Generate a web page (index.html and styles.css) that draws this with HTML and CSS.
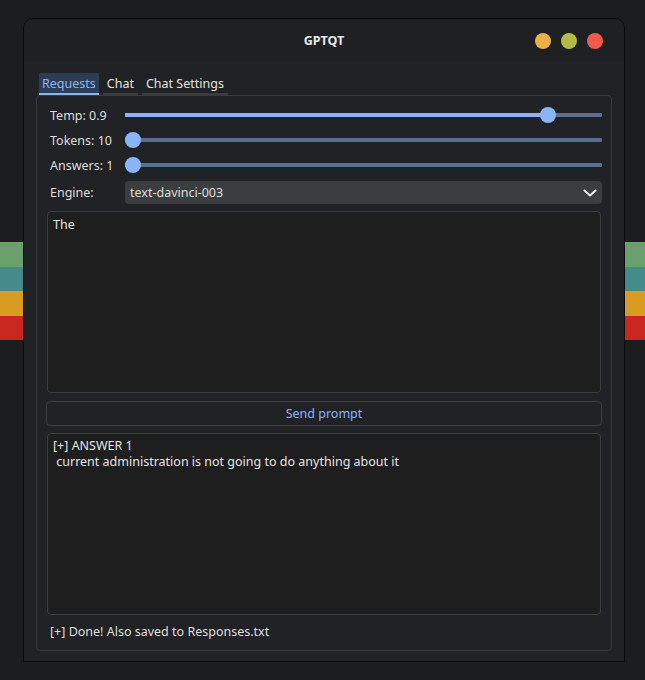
FILE: index.html
```html
<!DOCTYPE html>
<html>
<head>
<meta charset="utf-8">
<title>GPTQT</title>
<link rel="stylesheet" href="styles.css">
</head>
<body>
<div class="window">
  <div class="titlebar">
    <div class="spacer"></div>
    <div class="title">GPTQT</div>
    <div class="dots">
      <span class="dot dot-min"></span>
      <span class="dot dot-max"></span>
      <span class="dot dot-close"></span>
    </div>
  </div>
  <div class="content">
    <div class="tabs">
      <div class="tab active">Requests</div>
      <div class="tab">Chat</div>
      <div class="tab">Chat Settings</div>
    </div>
    <div class="pane">
      <div class="controls">
        <div class="label">Temp: 0.9</div>
        <div class="slider">
          <div class="fill" style="width: 423px"></div>
          <div class="handle" style="left: 415px"></div>
        </div>
        <div class="label">Tokens: 10</div>
        <div class="slider">
          <div class="fill" style="width: 8px"></div>
          <div class="handle" style="left: 0px"></div>
        </div>
        <div class="label">Answers: 1</div>
        <div class="slider">
          <div class="fill" style="width: 8px"></div>
          <div class="handle" style="left: 0px"></div>
        </div>
        <div class="label label-engine">Engine:</div>
        <div class="combo">
          <span>text-davinci-003</span>
          <svg class="chevron" width="14" height="8" viewBox="0 0 14 8"><path d="M1.5 1.5 L7 6.5 L12.5 1.5" fill="none" stroke="#f0f0f0" stroke-width="2" stroke-linecap="round" stroke-linejoin="round"/></svg>
        </div>
      </div>
      <div class="textbox prompt">The</div>
      <div class="button">Send prompt</div>
      <div class="textbox answer">[+] ANSWER 1<br>&nbsp;current administration is not going to do anything about it</div>
      <div class="status">[+] Done! Also saved to Responses.txt</div>
    </div>
  </div>
</div>
</body>
</html>
```
FILE: styles.css
```css
html, body {
  margin: 0;
  padding: 0;
}
body {
  width: 645px;
  height: 680px;
  overflow: hidden;
  font-family: "Noto Sans", "DejaVu Sans", sans-serif;
  font-size: 12.5px;
  color: #dedede;
  background:
    linear-gradient(to bottom,
      #1b1d1f 0, #1b1d1f 242px,
      #6b9f6e 242px, #6b9f6e 267px,
      #458b8c 267px, #458b8c 291px,
      #d99c23 291px, #d99c23 316px,
      #c8281f 316px, #c8281f 340px,
      #1b1d1f 340px, #1b1d1f 680px);
  display: flex;
  align-items: flex-start;
}
.window {
  margin: 18px 0 0 23px;
  width: 602px;
  height: 644px;
  box-sizing: border-box;
  border: 1px solid #0b0b0c;
  border-radius: 10px 10px 0 0;
  background: #212225;
  display: flex;
  flex-direction: column;
  overflow: hidden;
}
.titlebar {
  height: 43px;
  flex: none;
  background: #1e2022;
  display: grid;
  grid-template-columns: 1fr auto 1fr;
  align-items: center;
}
.title {
  font-weight: bold;
  font-size: 12.5px;
  color: #e8e8e8;
}
.dots {
  justify-self: end;
  display: flex;
  gap: 10px;
  padding-right: 21px;
}
.dot {
  width: 16px;
  height: 16px;
  border-radius: 50%;
  display: block;
}
.dot-min { background: #e9b143; }
.dot-max { background: #b2bb44; }
.dot-close { background: #f25a4c; }
.content {
  flex: 1;
  display: flex;
  flex-direction: column;
  padding: 11px 12px 10px 12px;
}
.tabs {
  display: flex;
  gap: 4px;
  margin-left: 3px;
  height: 22px;
  flex: none;
}
.tab {
  padding: 1px 4px 0 4px;
  line-height: 19px;
  border-bottom: 2px solid #3b3c3f;
  color: #e2e2e2;
}
.tab.active {
  padding: 1px 3px 0 3px;
  background: #2c3e54;
  color: #8ab4f8;
  border-bottom-color: #8ab4f8;
  border-radius: 2px 2px 0 0;
}
.pane {
  flex: 1;
  border: 1px solid #3a3b3e;
  border-radius: 4px;
  padding: 9px 10px 0 10px;
  display: flex;
  flex-direction: column;
}
.controls {
  display: grid;
  grid-template-columns: 78px 1fr;
  grid-template-rows: 20px 20px 20px 24px;
  row-gap: 5px;
  margin-right: -1px;
}
.label {
  padding: 1px 0 0 3px;
  line-height: 19px;
  align-self: center;
}
.label-engine {
  align-self: end;
  padding-top: 0;
  line-height: 23px;
}
.slider {
  position: relative;
  align-self: center;
  height: 4px;
  background: #5a7092;
  border-radius: 1px;
}
.fill {
  height: 4px;
  background: #8ab4f8;
  border-radius: 1px;
}
.handle {
  position: absolute;
  top: -6px;
  width: 16px;
  height: 16px;
  border-radius: 50%;
  background: #8ab4f8;
}
.combo {
  align-self: end;
  height: 23px;
  background: #3c3d40;
  border-radius: 4px;
  display: flex;
  align-items: center;
  justify-content: space-between;
  padding: 0 5px 0 5px;
}
.chevron {
  display: block;
}
.textbox {
  height: 182px;
  box-sizing: border-box;
  background: #1e1e1f;
  border: 1px solid #3d3e41;
  border-radius: 4px;
  padding: 4px 5px;
  line-height: 16px;
  color: #e4e4e4;
}
.prompt {
  margin-top: 7px;
  padding-top: 5px;
}
.button {
  margin-top: 8px;
  margin-right: -1px;
  margin-left: -1px;
  height: 25px;
  box-sizing: border-box;
  border: 1px solid #3d3e41;
  border-radius: 4px;
  background: #212225;
  color: #8ab4f8;
  display: flex;
  align-items: center;
  justify-content: center;
}
.answer {
  margin-top: 7px;
}
.status {
  margin-top: 8px;
  padding-left: 3px;
  line-height: 18px;
}
```
